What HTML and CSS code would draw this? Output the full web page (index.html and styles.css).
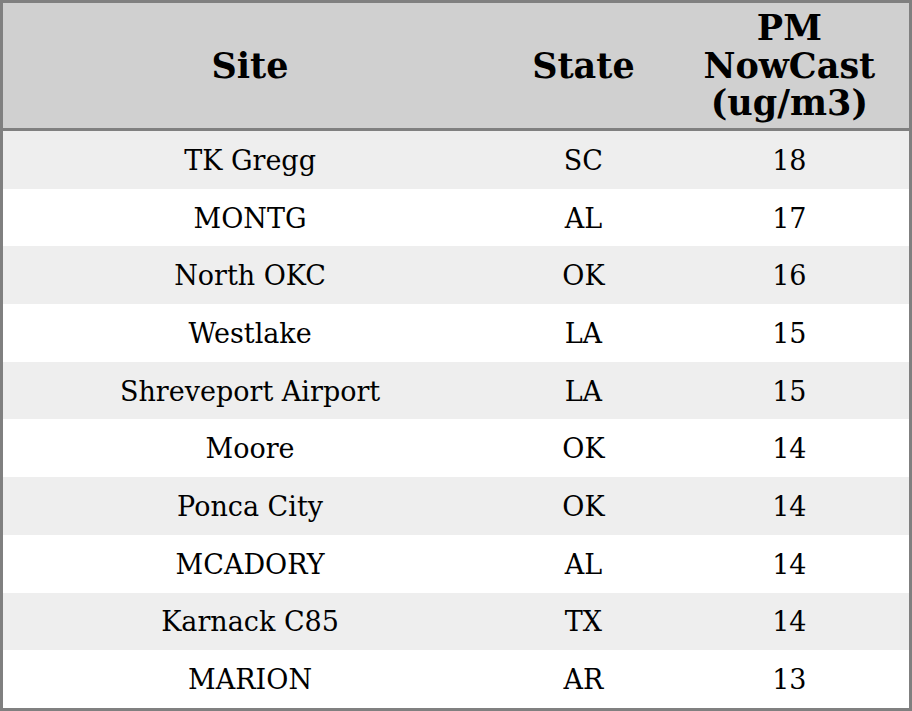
FILE: index.html
```html
<!DOCTYPE html>
<html>
<head>
<meta charset="utf-8">
<link rel="stylesheet" href="styles.css">
</head>
<body>
<table class="grid">
  <colgroup>
    <col class="c-site">
    <col class="c-state">
    <col class="c-pm">
  </colgroup>
  <thead>
    <tr><th>Site</th><th>State</th><th>PM<br>NowCast<br>(ug/m3)</th></tr>
  </thead>
  <tbody>
    <tr><td>TK Gregg</td><td>SC</td><td>18</td></tr>
    <tr><td>MONTG</td><td>AL</td><td>17</td></tr>
    <tr><td>North OKC</td><td>OK</td><td>16</td></tr>
    <tr><td>Westlake</td><td>LA</td><td>15</td></tr>
    <tr><td>Shreveport Airport</td><td>LA</td><td>15</td></tr>
    <tr><td>Moore</td><td>OK</td><td>14</td></tr>
    <tr><td>Ponca City</td><td>OK</td><td>14</td></tr>
    <tr><td>MCADORY</td><td>AL</td><td>14</td></tr>
    <tr><td>Karnack C85</td><td>TX</td><td>14</td></tr>
    <tr><td>MARION</td><td>AR</td><td>13</td></tr>
  </tbody>
</table>
</body>
</html>
```
FILE: styles.css
```css
html, body {
  margin: 0;
  padding: 0;
  background: #ffffff;
}
.grid {
  width: 912px;
  border-collapse: collapse;
  border: 3px solid #808080;
  table-layout: fixed;
  font-family: "DejaVu Serif", serif;
  color: #000;
}
.c-site { width: 494px; }
.c-state { width: 172px; }
.c-pm { width: 240px; }
.grid th {
  background: #d0d0d0;
  font-size: 35px;
  font-weight: bold;
  line-height: 37.5px;
  height: 128px;
  padding: 0;
  text-align: center;
  vertical-align: middle;
  border-bottom: 3px solid #808080;
  box-sizing: border-box;
}
.grid td {
  font-size: 27px;
  height: 56.7px;
  padding: 1px 0 0;
  text-align: center;
  vertical-align: middle;
}
.grid tbody tr:nth-child(odd) { background: #eeeeee; }
.grid tbody tr:nth-child(even) { background: #ffffff; }
```
